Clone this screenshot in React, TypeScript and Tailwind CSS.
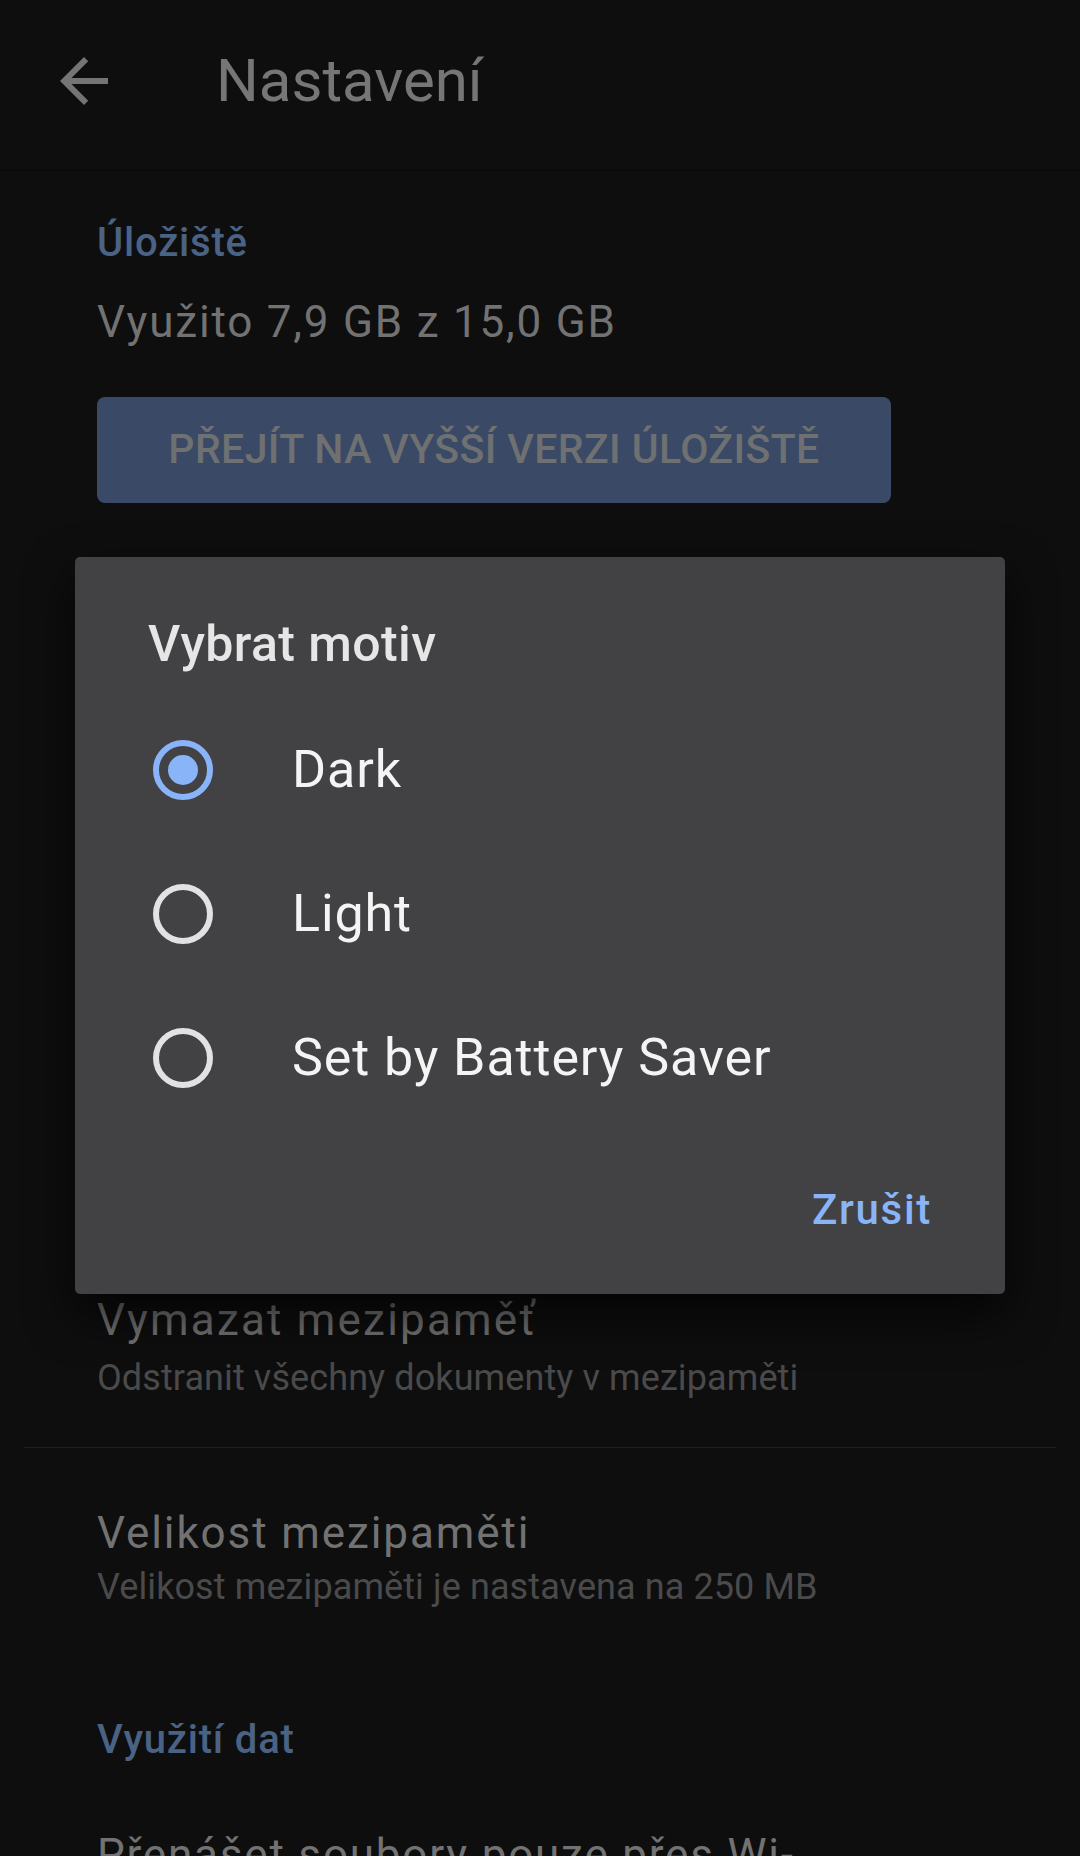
const radioOptions = ["Dark", "Light", "Set by Battery Saver"];

function BackArrow() {
  return (
    <svg width="72" height="72" viewBox="0 0 24 24" fill="#747474">
      <path d="M20 11H7.83l5.59-5.59L12 4l-8 8 8 8 1.41-1.41L7.83 13H20v-2z" />
    </svg>
  );
}

function Radio({ checked }: { checked: boolean }) {
  return (
    <div
      className={`w-[60px] h-[60px] rounded-full border-[6px] flex items-center justify-center ${
        checked ? "border-[#8ab4f8]" : "border-[#e2e2e2]"
      }`}
    >
      {checked && <div className="w-[30px] h-[30px] rounded-full bg-[#8ab4f8]" />}
    </div>
  );
}

function ThemeDialog() {
  const selected = 0;
  return (
    <div className="absolute left-[75px] top-[557px] w-[930px] h-[737px] bg-[#424244] rounded-[5px] shadow-[0_20px_48px_rgba(0,0,0,0.7)] flex flex-col">
      {/* Titulek */}
      <div className="mt-[57px] pl-[73px] h-[60px] leading-[60px] text-[50px] font-medium tracking-[0.4px] text-[#e6e6e6]">
        Vybrat motiv
      </div>

      {/* Volby */}
      <div className="mt-[24px] flex flex-col">
        {radioOptions.map((label, index) => (
          <div key={label} className="h-[144px] flex items-center">
            <div className="w-[217px] pl-[78px]">
              <Radio checked={index === selected} />
            </div>
            <span className="text-[52px] leading-[60px] tracking-[0.9px] text-[#f4f4f4]">{label}</span>
          </div>
        ))}
      </div>

      {/* Akce */}
      <div className="mt-[52px] flex justify-end pr-[73px]">
        <span className="h-[56px] leading-[56px] text-[42px] font-medium tracking-[1.7px] text-[#8ab4f8]">
          Zrušit
        </span>
      </div>
    </div>
  );
}

export default function App() {
  return (
    <div
      className="relative w-[1080px] h-[1856px] overflow-hidden bg-[#0e0e0f]"
      style={{ fontFamily: "Roboto, 'Noto Sans', sans-serif" }}
    >
      {/* Horní lišta */}
      <div className="h-[171px] border-b border-[#09090a]">
        <div className="h-[162px] flex items-center">
          <div className="ml-[48px] w-[72px] h-[72px]">
            <BackArrow />
          </div>
          <h1 className="ml-[96px] text-[60px] leading-[72px] text-[#767676]">Nastavení</h1>
        </div>
      </div>

      {/* Úložiště */}
      <div className="pl-[97px]">
        <div className="mt-[47px] h-[50px] leading-[50px] text-[40px] font-medium tracking-[0.8px] text-[#4a6284]">
          Úložiště
        </div>
        <div className="mt-[26px] h-[56px] leading-[56px] text-[44px] tracking-[1.8px] text-[#727272]">
          Využito 7,9 GB z 15,0 GB
        </div>
        <button className="mt-[47px] w-[794px] h-[106px] rounded-[8px] bg-[#3a4a66] text-[41px] font-medium tracking-[0.4px] text-[#6e7072]">
          PŘEJÍT NA VYŠŠÍ VERZI ÚLOŽIŠTĚ
        </button>
      </div>

      {/* Mezipaměť */}
      <div className="mt-[789px] pl-[97px]">
        <div className="h-[56px] leading-[56px] text-[44px] tracking-[2.2px] text-[#727272]">
          Vymazat mezipaměť
        </div>
        <div className="mt-[8px] h-[44px] leading-[44px] text-[36px] tracking-[0.1px] text-[#4a4a4b]">
          Odstranit všechny dokumenty v mezipaměti
        </div>
      </div>
      <div className="mt-[47px] mx-[24px] h-[1px] bg-[#1e1e20]" />
      <div className="mt-[57px] pl-[97px]">
        <div className="h-[56px] leading-[56px] text-[44px] tracking-[1.9px] text-[#727272]">
          Velikost mezipaměti
        </div>
        <div className="mt-[4px] h-[44px] leading-[44px] text-[36px] tracking-[0.1px] text-[#4a4a4b]">
          Velikost mezipaměti je nastavena na 250 MB
        </div>
      </div>

      {/* Využití dat */}
      <div className="pl-[97px]">
        <div className="mt-[106px] h-[50px] leading-[50px] text-[40px] font-medium tracking-[0.8px] text-[#4a6284]">
          Využití dat
        </div>
        <div className="mt-[62px] h-[56px] leading-[56px] text-[44px] tracking-[1.8px] text-[#727272] whitespace-nowrap">
          Přenášet soubory pouze přes Wi-
        </div>
      </div>

      <ThemeDialog />
    </div>
  );
}
